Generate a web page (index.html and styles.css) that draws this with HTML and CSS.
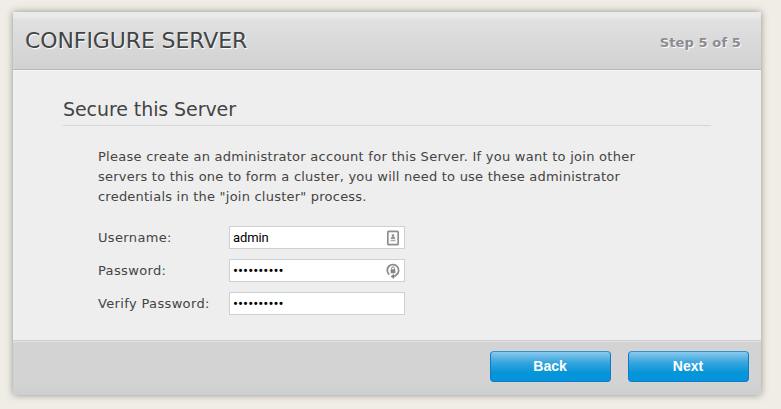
FILE: index.html
```html
<!DOCTYPE html>
<html lang="en">
<head>
<meta charset="utf-8">
<title>Configure Server</title>
<link rel="stylesheet" href="styles.css">
</head>
<body>
<main class="panel">
  <header class="head">
    <h1 class="title">CONFIGURE SERVER</h1>
    <span class="step">Step 5 of 5</span>
  </header>
  <section class="content">
    <h2 class="subtitle">Secure this Server</h2>
    <p class="intro">Please create an administrator account for this Server. If you want to join other<br><span class="tight">servers to this one to form a cluster, you will need to use these administrator<br>credentials in the "join cluster" process.</span></p>
    <form class="form">
      <label for="user">Username:</label>
      <div class="field">
        <input id="user" type="text" value="admin">
        <svg class="icon" viewBox="0 0 14 16"><rect x="1.8" y="1.3" width="10.4" height="13.4" rx="1" fill="#fafafa" stroke="#8e8e8e" stroke-width="1.7"/><circle cx="7" cy="5.4" r="1.2" fill="#858585"/><path d="M4.9 8.8V8.2q0-1.7 2.1-1.7t2.1 1.7v.6z" fill="#858585"/><path d="M4.6 10.5h4.8" stroke="#aaa" stroke-width="1.4"/></svg>
      </div>
      <label for="pass">Password:</label>
      <div class="field">
        <input id="pass" type="password" value="adminadmin">
        <svg class="icon" viewBox="0 0 14 16"><path d="M3.3 11.6A5.7 5.7 0 1 1 10.4 11.8Q9 13.4 7 13.6" fill="none" stroke="#8e8e8e" stroke-width="1.8"/><path d="M4.6 13.5L8 10.7v5.3z" fill="#858585"/><rect x="4.6" y="6.3" width="4.8" height="3.9" rx=".5" fill="#858585"/><path d="M5.6 6.6V5.3a1.4 1.4 0 0 1 2.8 0v1.3" fill="none" stroke="#858585"/></svg>
      </div>
      <label for="verify">Verify Password:</label>
      <div class="field"><input id="verify" type="password" value="adminadmin"></div>
    </form>
  </section>
  <footer class="foot">
    <button class="btn" type="button">Back</button>
    <button class="btn" type="button">Next</button>
  </footer>
</main>
</body>
</html>
```
FILE: styles.css
```css
* { box-sizing: border-box; }
html, body { height: 100%; overflow: hidden; }
body {
  margin: 0;
  padding: 12px 20px 14px 13px;
  background: #f0ede6;
  color: #444;
  font-family: "DejaVu Sans", Verdana, sans-serif;
  font-size: 13px;
}
.panel {
  display: flex;
  flex-direction: column;
  height: 383px;
  background: #eee;
  border-radius: 0 0 3px 3px;
  box-shadow: 0 0 7px rgba(80, 85, 70, .6);
}
.head {
  display: flex;
  justify-content: space-between;
  align-items: center;
  height: 58px;
  padding: 0 20px 0 12px;
  border-bottom: 1px solid #b5b8be;
  box-shadow: 0 1px 0 #f8f8fa;
  background: linear-gradient(#ececec 0, #e9e9e9 6px, #e1e1e1 7px, #d1d1d1 100%);
  text-shadow: 1px 1px 1px #fff;
}
.title { margin: 0; font-size: 22px; font-weight: 400; letter-spacing: -.1px; }
.step { margin-top: 4px; color: #8c8c90; font-size: 13px; font-weight: 700; letter-spacing: .12px; }
.content { flex: 1; padding: 26px 50px 0; }
.subtitle {
  margin: 0;
  height: 30px;
  line-height: 27px;
  border-bottom: 1px solid #d6d6d6;
  font-size: 19px;
  font-weight: 400;
  letter-spacing: -.08px;
}
.intro { margin: 21px 0 0 35px; line-height: 20px; letter-spacing: .265px; white-space: nowrap; }
.tight { letter-spacing: .225px; }
.form {
  display: grid;
  grid-template-columns: 131px 176px;
  grid-auto-rows: 23px;
  row-gap: 10px;
  align-items: center;
  margin: 19px 0 0 35px;
  letter-spacing: .35px;
}
.field { position: relative; height: 23px; }
.field input {
  display: block;
  width: 176px;
  height: 23px;
  padding: 0 3px;
  border: 1px solid #cbd1d5;
  background: #fff;
  color: #000;
  font: 15px Roboto, sans-serif;
  outline: 0;
}
.field input[type="text"] { font-size: 13px; letter-spacing: -.1px; }
.icon { position: absolute; right: 5px; top: 4px; width: 14px; height: 16px; }
.foot {
  display: flex;
  justify-content: flex-end;
  gap: 17px;
  height: 55px;
  padding: 10px 12px 0;
  border-top: 1px solid #cfcfcf;
  border-radius: 0 0 3px 3px;
  box-shadow: inset 0 1px 0 #e2e2e2;
  background: linear-gradient(#d3d3d3 75%, #cecfd2);
}
.btn {
  width: 121px;
  height: 31px;
  padding: 0 1px 2px 0;
  border: 1px solid #1378c8;
  border-top-color: #2f91d2;
  border-radius: 4px;
  background: linear-gradient(#8ac9ee, #39a6de 35%, #0895d9 70%, #0095dc);
  color: #fff;
  font: 700 14px "Liberation Sans", Arial, sans-serif;
}
```
